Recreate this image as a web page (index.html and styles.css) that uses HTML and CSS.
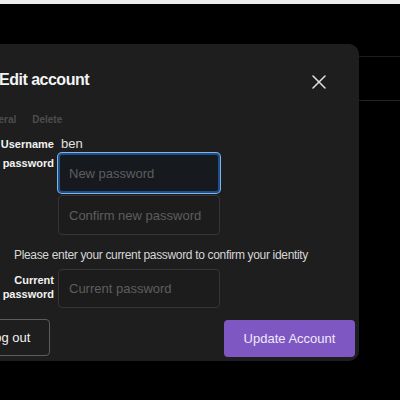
FILE: index.html
```html
<!DOCTYPE html>
<html lang="en">
<head>
<meta charset="utf-8">
<title>Edit account</title>
<link rel="stylesheet" href="styles.css">
</head>
<body>
<div class="page">
  <div class="top-strip"></div>
  <div class="nav-bar"></div>
</div>
<div class="modal">
  <div class="modal-header">
    <h2 class="modal-title">Edit account</h2>
    <button class="close-btn" aria-label="Close">
      <svg width="14" height="14" viewBox="0 0 14 14"><path d="M1 1 L13 13 M13 1 L1 13" stroke="#e2e2e2" stroke-width="1.5" stroke-linecap="round" fill="none"/></svg>
    </button>
  </div>
  <div class="tabs">
    <span class="tab">General</span>
    <span class="tab">Delete</span>
  </div>
  <form class="form">
    <label class="label label-inline">Username</label>
    <span class="value">ben</span>
    <span class="spacer"></span>

    <label class="label label-top">New password</label>
    <input class="input focused" type="password" placeholder="New password">
    <span class="spacer"></span>

    <span class="empty"></span>
    <input class="input input-second" type="password" placeholder="Confirm new password">
    <span class="spacer"></span>

    <p class="help">Please enter your current password to confirm your identity</p>

    <label class="label label-top label-current">Current password</label>
    <input class="input input-current" type="password" placeholder="Current password">
    <span class="spacer"></span>
  </form>
  <div class="footer">
    <button class="btn btn-outline" type="button">Log out</button>
    <button class="btn btn-primary" type="button">Update Account</button>
  </div>
</div>
</body>
</html>
```
FILE: styles.css
```css
* { box-sizing: border-box; }
html, body {
  margin: 0;
  padding: 0;
  background: #000;
  width: 400px;
  height: 400px;
  overflow: hidden;
  font-family: "Liberation Sans", Arial, Helvetica, sans-serif;
}
.page {
  display: flex;
  flex-direction: column;
}
.top-strip {
  height: 4px;
  background: #ececec;
}
.nav-bar {
  margin-top: 52px;
  height: 45px;
  border-top: 1px solid #1e1e1e;
  border-bottom: 1px solid #262626;
}
.modal {
  position: absolute;
  left: -37px;
  top: 44px;
  width: 396px;
  height: 317px;
  background: #1e1e1e;
  border-radius: 10px;
  padding: 26px 4px 4px 4px;
  display: flex;
  flex-direction: column;
  box-shadow: 0 2px 8px rgba(0,0,0,0.5);
}
.modal-header {
  display: flex;
  align-items: center;
  justify-content: space-between;
  height: 20px;
  padding-left: 32px;
  padding-right: 29px;
}
.modal-title {
  margin: 0;
  font-size: 16px;
  line-height: 20px;
  font-weight: bold;
  color: #f4f4f4;
  letter-spacing: -0.5px;
}
.close-btn {
  background: none;
  border: 0;
  padding: 0;
  width: 14px;
  height: 14px;
  margin-top: 3px;
  display: flex;
}
.tabs {
  display: flex;
  gap: 16px;
  margin-top: 23px;
  padding-left: 12px;
  font-size: 10px;
  line-height: 14px;
  font-weight: bold;
  color: #4d4d4d;
}
.form {
  display: grid;
  grid-template-columns: 80px 162px 1fr;
  column-gap: 4px;
  margin: 9px 0 0 7px;
  padding-right: 7px;
}
.label {
  font-size: 11px;
  line-height: 14px;
  font-weight: bold;
  color: #f2f2f2;
  text-align: right;
}
.label-inline {
  align-self: center;
}
.label-top {
  padding-top: 4px;
}
.label-current {
  padding-top: 10px;
}
.value {
  font-size: 13px;
  line-height: 16px;
  color: #e0e0e0;
  padding-left: 3px;
}
.input {
  width: 162px;
  height: 40px;
  margin: 0;
  border: 1px solid #353535;
  border-radius: 4px;
  background: #1c1c1c;
  padding: 0 10px;
  font-family: "Liberation Sans", Arial, sans-serif;
  font-size: 13px;
  color: #ddd;
  outline: none;
}
.input::placeholder {
  color: #5e5e5e;
}
.focused {
  margin-top: 1px;
  border: 2px solid #1f4f88;
  padding: 0 9px;
  background: #16191e;
  box-shadow: 0 0 0 1px #7fb3ef;
}
.input-second {
  margin-top: 2px;
}
.input-current {
  margin-top: 6px;
  height: 39px;
}
.help {
  grid-column: 1 / -1;
  margin: 12px 0 0 0;
  font-size: 12px;
  line-height: 16px;
  letter-spacing: -0.33px;
  color: #d6d6d6;
  text-align: center;
  white-space: nowrap;
}
.footer {
  margin-top: auto;
  display: flex;
  justify-content: space-between;
  align-items: flex-end;
}
.btn {
  height: 37px;
  padding: 0 20px;
  border-radius: 4px;
  font-family: "Liberation Sans", Arial, sans-serif;
  font-size: 13px;
  white-space: nowrap;
}
.btn-outline {
  background: transparent;
  border: 1px solid #5c5c5c;
  color: #f0f0f0;
  padding: 0 19px;
  margin-bottom: 1px;
}
.btn-primary {
  background: #7e57c2;
  border: 0;
  color: #efe8fb;
  width: 131px;
  padding: 0;
}
```
